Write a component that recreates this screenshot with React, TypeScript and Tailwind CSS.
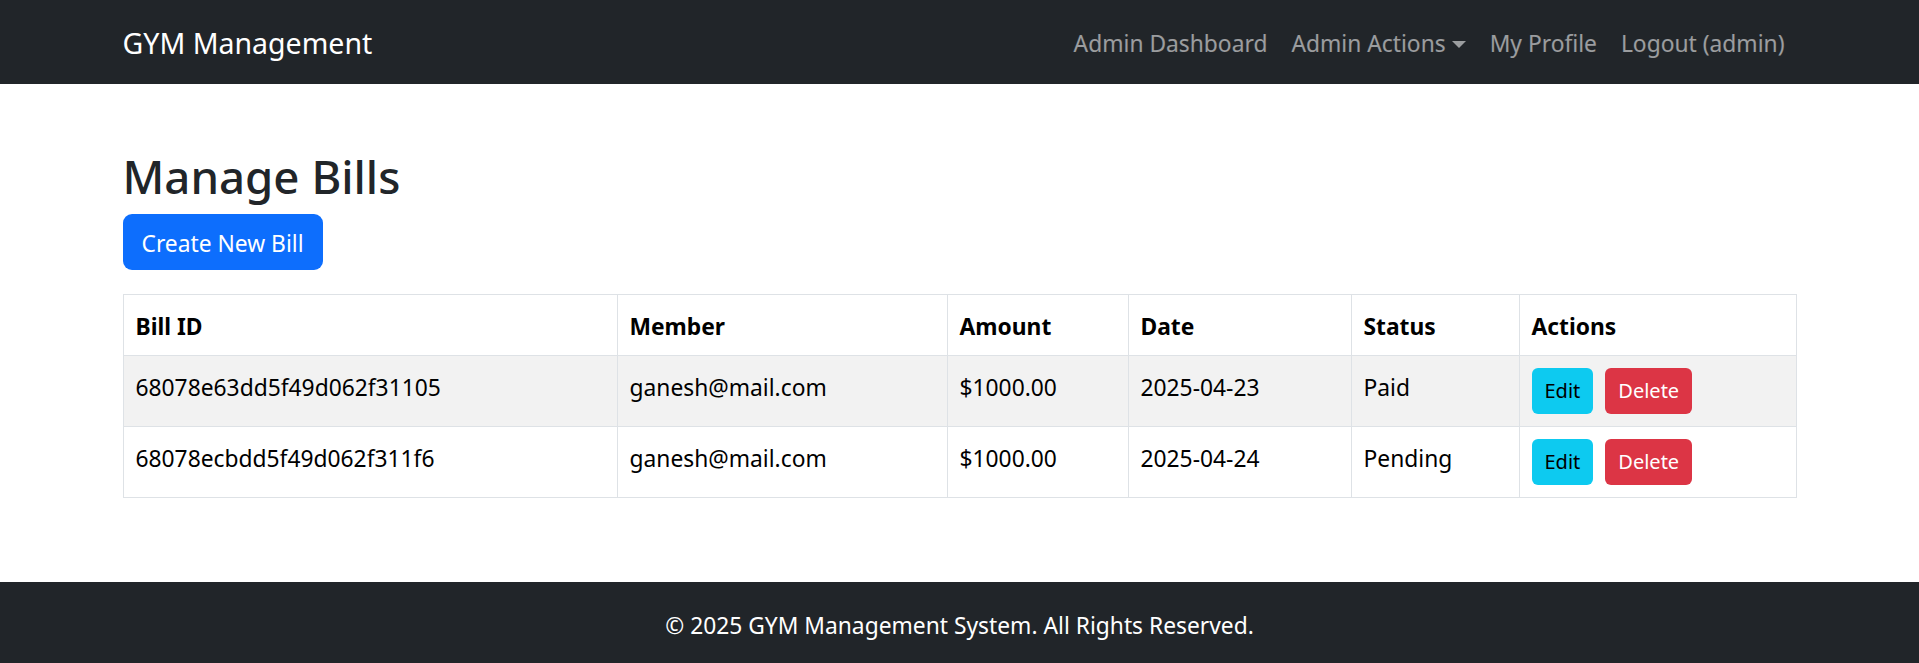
import React from "react";

const bills = [
  { id: "68078e63dd5f49d062f31105", member: "ganesh@mail.com", amount: "$1000.00", date: "2025-04-23", status: "Paid" },
  { id: "68078ecbdd5f49d062f311f6", member: "ganesh@mail.com", amount: "$1000.00", date: "2025-04-24", status: "Pending" },
];

export default function App() {
  return (
    <div
      className="min-h-screen bg-white text-[#212529]"
      style={{ fontFamily: '"Noto Sans", "Open Sans", sans-serif' }}
    >
      <nav className="bg-[#212529] h-[84px]">
        <div className="mx-auto w-[1674px] h-full flex items-center justify-between">
          <a className="text-white text-[28.5px] leading-[45px] pt-[2px]">GYM Management</a>
          <ul className="flex items-center text-[22.8px] leading-[36px] text-white/55 pt-[3px]">
            <li className="px-[12px]">Admin Dashboard</li>
            <li className="px-[12px] flex items-center">
              Admin Actions
              <span className="inline-block w-0 h-0 ml-[6px] mt-[2px] border-t-[7px] border-t-current border-x-[7px] border-x-transparent" />
            </li>
            <li className="px-[12px]">My Profile</li>
            <li className="px-[12px]">Logout (admin)</li>
          </ul>
        </div>
      </nav>

      <main className="mx-auto w-[1674px] pt-[63px] pb-[84px]">
        <h2 className="text-[45.6px] leading-[58px] font-medium mb-[9px]">Manage Bills</h2>
        <button className="h-[56px] px-[19px] pt-[3px] rounded-[9px] bg-[#0d6efd] text-white text-[22.8px] leading-[36px]">
          Create New Bill
        </button>
        <table className="mt-[24px] w-full border-collapse text-black text-[22.8px] leading-[36px]">
          <colgroup>
            <col className="w-[494px]" />
            <col className="w-[330px]" />
            <col className="w-[181px]" />
            <col className="w-[223px]" />
            <col className="w-[168px]" />
            <col className="w-[277px]" />
          </colgroup>
          <thead>
            <tr>
              {["Bill ID", "Member", "Amount", "Date", "Status", "Actions"].map((h) => (
                <th key={h} className="border border-[#dee2e6] px-[12px] pt-[14px] pb-[10px] text-left font-bold align-top">
                  {h}
                </th>
              ))}
            </tr>
          </thead>
          <tbody>
            {bills.map((b, i) => (
              <tr key={b.id} className={i === 0 ? "bg-[#f2f2f2]" : "bg-white"}>
                <td className="border border-[#dee2e6] px-[12px] pt-[14px] pb-[10px] align-top">{b.id}</td>
                <td className="border border-[#dee2e6] px-[12px] pt-[14px] pb-[10px] align-top">{b.member}</td>
                <td className="border border-[#dee2e6] px-[12px] pt-[14px] pb-[10px] align-top">{b.amount}</td>
                <td className="border border-[#dee2e6] px-[12px] pt-[14px] pb-[10px] align-top">{b.date}</td>
                <td className="border border-[#dee2e6] px-[12px] pt-[14px] pb-[10px] align-top">{b.status}</td>
                <td className="border border-[#dee2e6] px-[12px] py-[12px] align-top">
                  <div className="flex gap-[12px]">
                    <button className="h-[46px] px-[13px] rounded-[6px] bg-[#0dcaf0] text-black text-[20px] leading-[30px]">
                      Edit
                    </button>
                    <button className="h-[46px] px-[13px] rounded-[6px] bg-[#dc3545] text-white text-[20px] leading-[30px]">
                      Delete
                    </button>
                  </div>
                </td>
              </tr>
            ))}
          </tbody>
        </table>
      </main>

      <footer className="bg-[#212529] text-white text-center pt-[26px] pb-[22px] text-[22.8px] leading-[36px]">
        © 2025 GYM Management System. All Rights Reserved.
      </footer>
    </div>
  );
}
